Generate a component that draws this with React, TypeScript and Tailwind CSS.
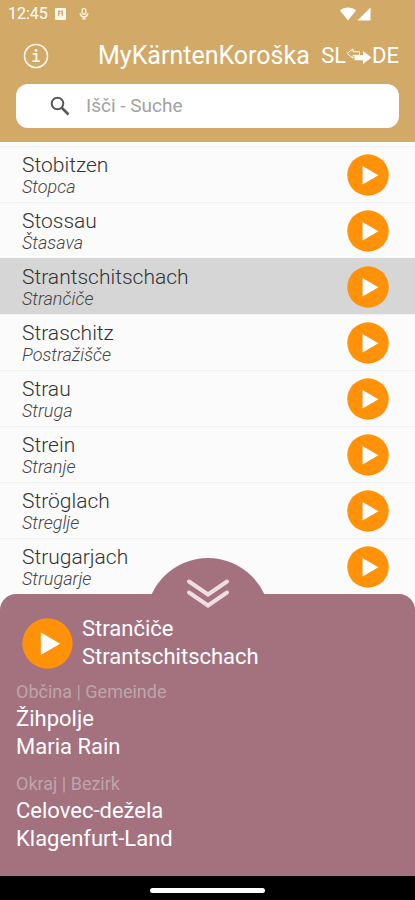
type Place = { de: string; sl: string };

const places: Place[] = [
  { de: "Stobitzen", sl: "Stopca" },
  { de: "Stossau", sl: "Štasava" },
  { de: "Strantschitschach", sl: "Strančiče" },
  { de: "Straschitz", sl: "Postražišče" },
  { de: "Strau", sl: "Struga" },
  { de: "Strein", sl: "Stranje" },
  { de: "Ströglach", sl: "Streglje" },
  { de: "Strugarjach", sl: "Strugarje" },
];

const selected = "Strantschitschach";

function PlayIcon({ className }: { className: string }) {
  return (
    <svg viewBox="0 0 42 42" className={className} aria-hidden="true">
      <circle cx="21" cy="21" r="20.7" fill="#ff9208" />
      <path d="M15.5 12v18.4L31.4 21.2z" fill="#fff" />
    </svg>
  );
}

function StatusBar() {
  return (
    <div className="flex h-7 items-center justify-between pl-2 pr-11 text-white">
      <div className="flex items-center">
        <span className="w-[47px] text-base leading-7">12:45</span>
        <svg viewBox="0 0 11 12" className="h-3 w-[11px]" aria-hidden="true">
          <rect width="11" height="12" rx="1.2" fill="#fffaf0" />
          <rect x="3" y="2.6" width="5" height="5.6" fill="#d3a967" />
          <path d="M4.2 8.2V6.8a1.3 1.3 0 0 1 2.6 0v1.4z" fill="#fffaf0" />
          <circle cx="5.5" cy="4.6" r="1" fill="#fffaf0" />
        </svg>
        <svg viewBox="0 0 10 12" className="ml-[13px] h-3 w-[10px]" fill="none" stroke="#fff3dc" aria-hidden="true">
          <path strokeWidth="1.4" d="M3.2 5V2.4a1.8 1.8 0 0 1 3.6 0V5" />
          <path strokeWidth="1.5" d="M1.2 5.2a3.8 3.8 0 0 0 7.6 0M2.6 6h4.8" />
          <path strokeWidth="1.6" d="M3.4 10.8h3.2M5 8.6v2.6" />
        </svg>
      </div>
      <svg viewBox="0 0 31 14" className="h-[14px] w-[31px]" fill="#fff" aria-hidden="true">
        <path d="M0 3.6C4.3-.7 11.7-.7 16 3.6L8 13.6z" />
        <path d="M30.5.5v13H17.5z" />
      </svg>
    </div>
  );
}

function Header() {
  return (
    <header className="bg-[#d3a967] pb-[14px]">
      <StatusBar />
      <div className="flex h-14 items-center pl-[23px] pr-4 text-white">
        <button type="button" aria-label="Info" className="w-[75px] shrink-0">
          <svg viewBox="0 0 26 26" className="size-[26px]" fill="none" stroke="#fffaf0" aria-hidden="true">
            <circle cx="13" cy="13" r="11.5" strokeWidth="1.6" />
            <path strokeWidth="1.8" d="M9.8 10.8h3.6v7M9.4 18.2h7.4" />
            <circle cx="13" cy="7.4" r="1.4" fill="#fffaf0" stroke="none" />
          </svg>
        </button>
        <h1 className="flex-1 whitespace-nowrap text-[25px] leading-8">MyKärntenKoroška</h1>
        <button type="button" aria-label="SL DE" className="flex items-center text-[22px] leading-8">
          <span>SL</span>
          <svg viewBox="0 0 26 16" className="h-4 w-[26px]" aria-hidden="true">
            <path d="M1 5.5 7 .8v2.9h6.500v3.600H7v3z" fill="none" stroke="#fffaf0" strokeWidth="1" />
            <path d="M8.500 7.200H17V3L25.500 9.500 17 16v-3.800H8.500z" fill="#fff" />
          </svg>
          <span>DE</span>
        </button>
      </div>
      <label className="mx-4 flex h-11 items-center rounded-xl bg-white pl-[34px]">
        <svg viewBox="0 0 20 20" className="size-5 shrink-0" fill="none" stroke="#575757" aria-hidden="true">
          <circle cx="7.5" cy="7.5" r="5.8" strokeWidth="2" />
          <path d="M12 12l6.5 6.5" strokeWidth="2.6" />
        </svg>
        <input
          type="search"
          aria-label="Išči - Suche"
          placeholder="Išči - Suche"
          className="ml-4 min-w-0 flex-1 bg-transparent text-[19px] text-gray-700 outline-none placeholder:text-[#a2a2a2]"
        />
      </label>
    </header>
  );
}

function PlaceRow({ place }: { place: Place }) {
  const active = place.de === selected;
  return (
    <li
      className={`flex h-14 items-center justify-between border-t pl-[22px] pr-[26px] ${
        active ? "border-[#d6d6d6] bg-[#d6d6d6]" : "border-[#f2f2f2]"
      }`}
    >
      <div className="whitespace-nowrap font-light">
        <p className="text-[21px] leading-6 text-[#333333]">{place.de}</p>
        <p className="text-lg leading-5 text-[#444444] italic">{place.sl}</p>
      </div>
      <button type="button" aria-label={`Play ${place.de}`}>
        <PlayIcon className="size-[42px]" />
      </button>
    </li>
  );
}

function Detail({ label, lines }: { label: string; lines: string[] }) {
  return (
    <section>
      <h2 className="text-lg leading-[26px] text-[#bda5ac]">{label}</h2>
      {lines.map((line) => (
        <p key={line} className="text-[22px] leading-7">
          {line}
        </p>
      ))}
    </section>
  );
}

function DetailPanel() {
  return (
    <div className="relative rounded-t-2xl bg-[#a4717f] px-4 pt-[21px] pb-[23px] text-white">
      <div className="absolute inset-x-0 -top-9 flex h-9 justify-center overflow-hidden">
        <div className="size-[124px] shrink-0 rounded-full bg-[#a4717f]" />
      </div>
      <button type="button" aria-label="Close" className="absolute inset-x-0 -top-4 mx-auto w-11">
        <svg
          viewBox="0 0 44 32"
          className="h-8 w-11"
          fill="none"
          stroke="#f0dce3"
          strokeWidth="4"
          strokeLinecap="round"
          aria-hidden="true"
        >
          <path d="M3 3.500l19 13L41 3.500M3 14.500l19 13L41 14.500" />
        </svg>
      </button>
      <div className="flex items-center gap-[9px] pl-[6px]">
        <button type="button" aria-label="Play Strančiče">
          <PlayIcon className="size-[51px]" />
        </button>
        <div className="text-[22px] leading-7">
          <p>Strančiče</p>
          <p>Strantschitschach</p>
        </div>
      </div>
      <div className="mt-2 flex flex-col gap-[10px]">
        <Detail label="Občina | Gemeinde" lines={["Žihpolje", "Maria Rain"]} />
        <Detail label="Okraj | Bezirk" lines={["Celovec-dežela", "Klagenfurt-Land"]} />
      </div>
    </div>
  );
}

export default function App() {
  return (
    <div className="flex min-h-screen flex-col bg-[#fbfbfb] font-['Roboto','Noto_Sans',sans-serif]">
      <Header />
      <ul className="flex-1 pt-1">
        {places.map((place) => (
          <PlaceRow key={place.de} place={place} />
        ))}
      </ul>
      <DetailPanel />
      <footer className="flex h-6 justify-center bg-black pt-3">
        <div className="h-[5px] w-[115px] rounded-full bg-white" />
      </footer>
    </div>
  );
}
